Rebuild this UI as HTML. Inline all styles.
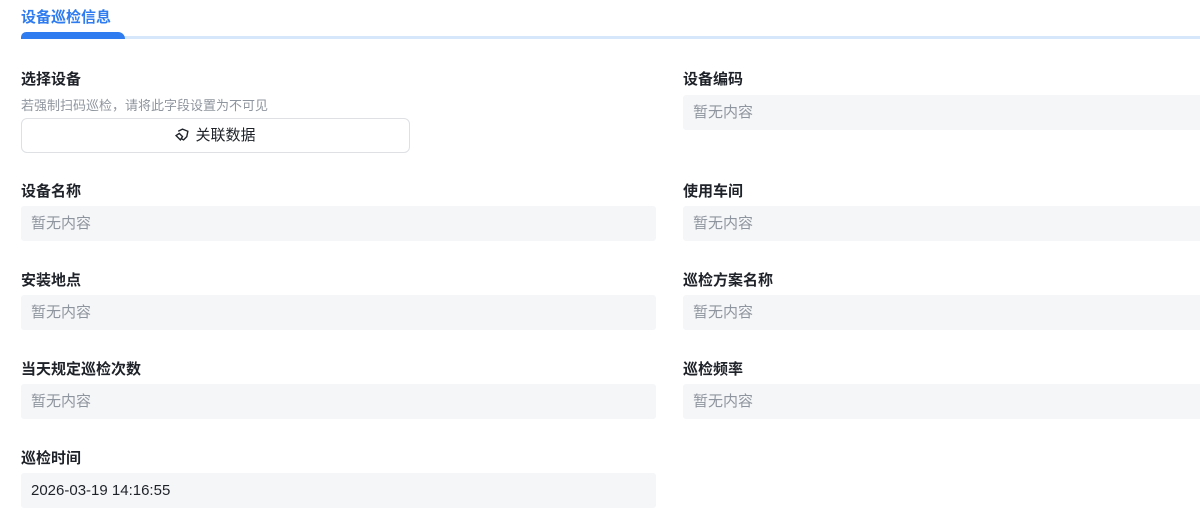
<!DOCTYPE html>
<html><head><meta charset="utf-8"><style>
*{margin:0;padding:0;box-sizing:border-box}
body{width:1200px;height:513px;background:#fff;font-family:"Liberation Sans","Noto Sans CJK SC",sans-serif;position:relative;overflow:hidden;color:#1f2329}
.a{position:absolute}
.tab{left:21px;top:6px;font-size:15px;font-weight:bold;color:#2f7cf0}
.line{left:21px;top:36px;width:1179px;height:3px;background:#d6e6fb}
.bar{left:21px;top:32px;width:104px;height:7px;background:#2f7cf0;border-radius:6px 8px 0 0}
.lb{font-size:15px;font-weight:bold;color:#1f2329}
.in{height:35px;background:#f5f6f8;border-radius:3px;font-size:15px;color:#8f959e;padding-left:10px;line-height:35px}
.L{left:21px;width:635px}.R{left:683px;width:530px}
</style></head><body>
<div class="a tab">设备巡检信息</div>
<div class="a line"></div><div class="a bar"></div>
<div class="a lb" style="left:21px;top:68px">选择设备</div>
<div class="a" style="left:21px;top:95px;font-size:13px;color:#8f959e">若强制扫码巡检，请将此字段设置为不可见</div>
<div class="a" style="left:21px;top:118px;width:389px;height:35px;border:1px solid #dee0e3;border-radius:6px;font-size:15px;text-align:center;line-height:33px;color:#1f2329">
<svg width="15" height="15" viewBox="0 0 14 14" style="vertical-align:-2px;margin-right:5px" fill="none" stroke="#1f2329" stroke-width="1.3"><path d="M3 4l4-2 5 2-1 5-3 3-2-1"/><path d="M1 8l3-2 3 3-2 3z"/></svg>关联数据</div>
<div class="a lb" style="left:683px;top:68px">设备编码</div>
<div class="a in R" style="top:95px">暂无内容</div>
<div class="a lb" style="left:21px;top:180px">设备名称</div>
<div class="a in L" style="top:206px">暂无内容</div>
<div class="a lb" style="left:683px;top:180px">使用车间</div>
<div class="a in R" style="top:206px">暂无内容</div>
<div class="a lb" style="left:21px;top:269px">安装地点</div>
<div class="a in L" style="top:295px">暂无内容</div>
<div class="a lb" style="left:683px;top:269px">巡检方案名称</div>
<div class="a in R" style="top:295px">暂无内容</div>
<div class="a lb" style="left:21px;top:358px">当天规定巡检次数</div>
<div class="a in L" style="top:384px">暂无内容</div>
<div class="a lb" style="left:683px;top:358px">巡检频率</div>
<div class="a in R" style="top:384px">暂无内容</div>
<div class="a lb" style="left:21px;top:447px">巡检时间</div>
<div class="a in L" style="top:473px;color:#1f2329">2026-03-19 14:16:55</div>
</body></html>
